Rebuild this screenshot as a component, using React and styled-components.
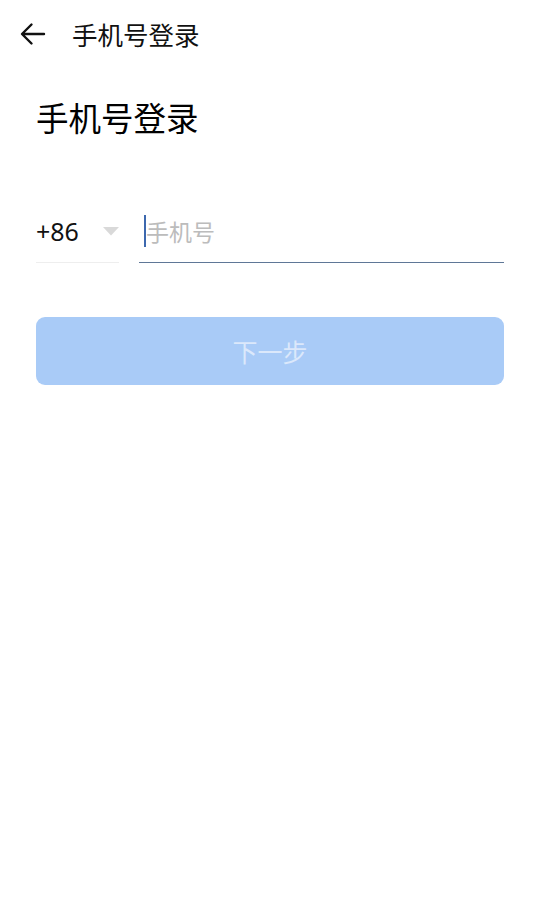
import React from "react";
import styled, { createGlobalStyle } from "styled-components";

const Global = createGlobalStyle`
  html, body { margin: 0; padding: 0; background: #fff; }
  body { font-family: "Noto Sans", "Noto Sans CJK SC", sans-serif; }
  * { box-sizing: border-box; }
`;

const Page = styled.div`
  width: 540px;
  min-height: 924px;
  background: #fff;
  display: flex;
  flex-direction: column;
`;

const TopBar = styled.header`
  height: 68px;
  display: flex;
  align-items: center;
  padding-left: 18px;
  gap: 26px;
`;

const BackButton = styled.button`
  border: none;
  background: none;
  padding: 0;
  width: 28px;
  height: 28px;
  display: flex;
  align-items: center;
  justify-content: center;
  cursor: pointer;
`;

const BarTitle = styled.h1`
  margin: 0;
  font-family: "Noto Sans CJK SC", sans-serif;
  font-weight: 400;
  font-size: 25.5px;
  color: #111;
  line-height: 1;
`;

const Content = styled.main`
  padding: 0 36px;
  display: flex;
  flex-direction: column;
`;

const Heading = styled.h2`
  margin: 27px 0 0;
  font-family: "Noto Sans CJK SC", sans-serif;
  font-weight: 400;
  font-size: 32.5px;
  line-height: 44px;
  color: #000;
`;

const FieldRow = styled.div`
  display: flex;
  gap: 20px;
  margin-top: 61px;
`;

const Field = styled.div`
  height: 63px;
  display: flex;
  align-items: center;
  border-bottom: 1px solid ${(p) => p.$line};
  ${(p) => (p.$grow ? "flex: 1;" : `width: ${p.$width}px;`)}
`;

const Code = styled.span`
  font-family: "Noto Sans", sans-serif;
  font-size: 25px;
  color: #111;
  flex: 1;
`;

const Caret = styled.span`
  width: 2px;
  height: 32px;
  background: #3d68ae;
  margin-left: 5px;
`;

const Placeholder = styled.span`
  font-family: "Noto Sans CJK SC", sans-serif;
  font-size: 23px;
  color: #bcbcbc;
`;

const NextButton = styled.button`
  margin-top: 54px;
  height: 68px;
  border: none;
  border-radius: 9px;
  background: #a9cbf7;
  color: #dbe8fb;
  font-family: "Noto Sans CJK SC", sans-serif;
  font-size: 25px;
  display: flex;
  align-items: center;
  justify-content: center;
`;

export default function App() {
  return (
    <Page>
      <Global />
      <TopBar>
        <BackButton aria-label="back">
          <svg width="28" height="28" viewBox="0 0 28 28" fill="none">
            <path d="M26 14H4.5M13.5 4.5L4 14l9.5 9.5" stroke="#111" strokeWidth="2.4" strokeLinecap="round" strokeLinejoin="round" />
          </svg>
        </BackButton>
        <BarTitle>手机号登录</BarTitle>
      </TopBar>
      <Content>
        <Heading>手机号登录</Heading>
        <FieldRow>
          <Field $width={83} $line="#eeeeee">
            <Code>+86</Code>
            <svg width="16" height="9" viewBox="0 0 16 9">
              <path d="M0 0h16L8 8.5z" fill="#d9d9d9" />
            </svg>
          </Field>
          <Field $grow $line="#5f7797">
            <Caret />
            <Placeholder>手机号</Placeholder>
          </Field>
        </FieldRow>
        <NextButton>下一步</NextButton>
      </Content>
    </Page>
  );
}
